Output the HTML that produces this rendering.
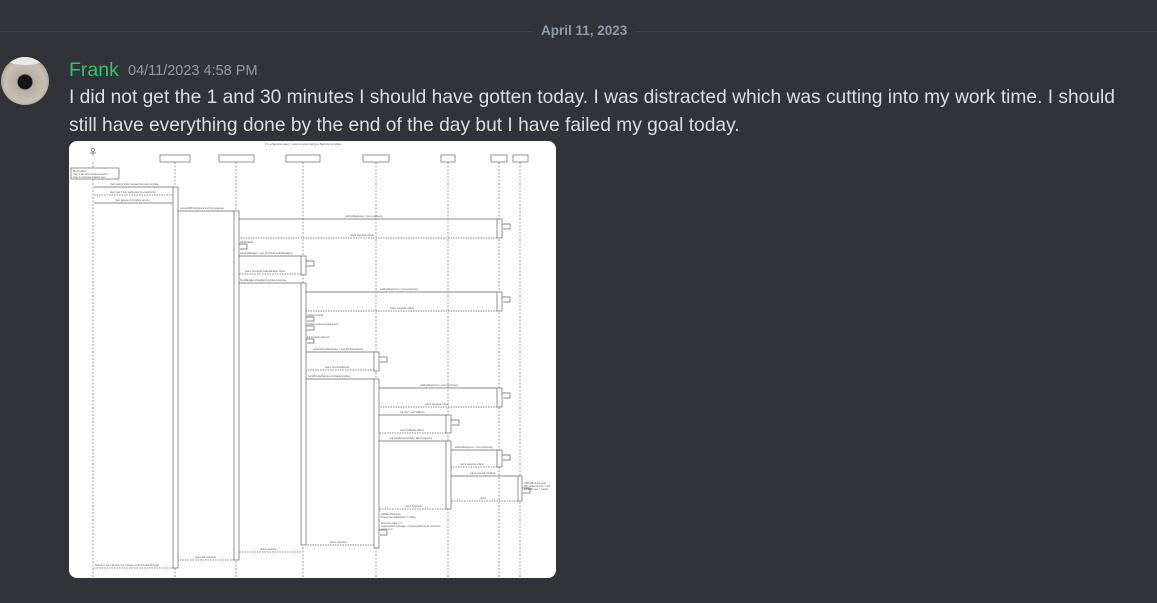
<!DOCTYPE html>
<html><head><meta charset="utf-8"><style>
body{margin:0;width:1157px;height:603px;background:#313338;overflow:hidden;font-family:"Liberation Sans",sans-serif;position:relative}
.div{position:absolute;top:31px;left:0;right:0;height:1px;background:#3f4147}
.date{position:absolute;top:22px;left:533px;padding:0 8px;background:#313338;color:#949ba4;font-size:13.5px;font-weight:bold;line-height:18px}
.av{position:absolute;left:1px;top:57px;width:48px;height:48px;border-radius:50%;background:radial-gradient(circle at 50% 52%,#141414 0 7px,#b8aca2 8px,#c9bfb5 20px,#a39d96 26px);overflow:hidden}
.av:before{content:"";position:absolute;left:4px;top:-6px;width:40px;height:14px;border-radius:50%;background:#e8e8e8}
.name{position:absolute;left:69px;top:58px;color:#2dc770;font-size:19.5px;line-height:24px}
.ts{position:absolute;left:128px;top:62px;color:#949ba4;font-size:14.5px;line-height:18px}
.msg{position:absolute;left:69px;top:84px;width:1050px;color:#dbdee1;font-size:19.2px;line-height:27.5px}
.img{position:absolute;left:69px;top:141px;width:487px;height:437px;background:#fff;border-radius:8px;overflow:hidden}
</style></head><body>
<div class="div"></div><div class="date">April 11, 2023</div>
<div class="av"></div>
<div class="name">Frank</div><div class="ts">04/11/2023 4:58 PM</div>
<div class="msg">I did not get the 1 and 30 minutes I should have gotten today. I was distracted which was cutting into my work time. I should still have everything done by the end of the day but I have failed my goal today.</div>
<div class="img">
<svg width="487" height="437" viewBox="69 141 487 437" xmlns="http://www.w3.org/2000/svg" font-family="Liberation Sans" font-size="3" fill="#555">
<text x="265" y="145">I'm a Service user, I want to stop being a Service provider</text>
<g stroke="#777" stroke-width="0.7" stroke-dasharray="2,1.5">
<line x1="93" y1="162" x2="93" y2="578"/><line x1="175" y1="162" x2="175" y2="578"/><line x1="236" y1="162" x2="236" y2="578"/><line x1="303" y1="162" x2="303" y2="578"/><line x1="376" y1="162" x2="376" y2="578"/><line x1="448" y1="162" x2="448" y2="578"/><line x1="499" y1="162" x2="499" y2="578"/><line x1="520" y1="162" x2="520" y2="578"/>
</g>
<g fill="#fff" stroke="#666" stroke-width="0.7">
<circle cx="93" cy="150" r="1.6"/><line x1="93" y1="152" x2="93" y2="156"/><line x1="90" y1="153" x2="96" y2="153"/>
<rect x="160" y="155" width="30" height="7"/><rect x="219" y="155" width="35" height="7"/><rect x="286" y="155" width="34" height="7"/><rect x="363" y="155" width="26" height="7"/><rect x="441" y="155" width="14" height="7"/><rect x="491" y="155" width="16" height="7"/><rect x="513" y="155" width="15" height="7"/>
<rect x="71" y="168" width="48" height="11"/>
<rect x="173" y="187" width="5" height="381"/><rect x="234" y="211" width="5" height="349"/>
<rect x="301" y="256" width="5" height="19"/><rect x="301" y="283" width="5" height="262"/>
<rect x="374" y="352" width="5" height="19"/><rect x="374" y="379" width="5" height="169"/>
<rect x="446" y="415" width="5" height="18"/><rect x="446" y="441" width="5" height="68"/>
<rect x="497" y="219" width="5" height="19"/><rect x="497" y="292" width="5" height="19"/><rect x="497" y="388" width="5" height="19"/><rect x="497" y="450" width="5" height="17"/>
<rect x="518" y="476" width="4" height="25"/>
</g>
<g stroke="#666" stroke-width="0.7" fill="none">
<path d="M94 187H173M94 203H173M178 211H234M239 219H497M239 256H301M239 283H301M306 292H497M306 352H374M306 379H374M379 388H497M379 415H446M379 441H446M451 450H497M451 476H518"/>
<path d="M502 224h8v5h-7M239 244h8v5h-7M306 261h8v5h-7M502 297h8v5h-7M306 317h8v4h-7M306 326h8v4h-7M306 339h8v4h-7M379 357h8v5h-7M502 393h8v5h-7M451 420h8v5h-7M502 455h8v5h-7M522 488h8v5h-7M379 530h8v5h-7"/>
<path stroke-dasharray="1.5,1" d="M173 195H94M497 238H239M301 274H239M497 311H306M374 370H306M497 407H379M446 433H379M497 467H451M518 501H451M446 509H379M374 545H306M301 552H239M234 560H178M173 568H94"/>
</g>
<g font-size="2.4">
<text x="73" y="172">Precondition</text><text x="73" y="175">User is an authenticated session</text><text x="73" y="178">User is a Service creation user</text>
<text x="110" y="185">User selects button answer that was complete</text><text x="110" y="193">Alert user if they really want to unsubscribe</text><text x="115" y="201">User agrees to complete service</text>
<text x="180" y="209">removeSPFCompleted and this response</text><text x="345" y="217">setFirstResponse = new response()</text><text x="350" y="236">return response object</text>
<text x="240" y="243">ISPasdfasdf</text><text x="240" y="254">serviceManager = new ServiceProviderManager()</text><text x="245" y="272">return ServiceProviderManager object</text><text x="240" y="281">ServManager.unregisterComplete response</text>
<text x="380" y="290">setFirstResponse = new response()</text><text x="390" y="309">return response object</text>
<text x="307" y="316">Update records</text><text x="307" y="325">Update response parameters</text><text x="307" y="338">log complete attempt</text>
<text x="313" y="350">setServProviderService = new ServFirstService</text><text x="325" y="368">return ServFirstService</text><text x="308" y="377">ServProviderService.completeComplete</text>
<text x="420" y="386">setFirstResponse = new response()</text><text x="425" y="405">return response object</text><text x="400" y="413">sql_obj = new SqlEntity</text><text x="400" y="431">return SqlEntity object</text><text x="390" y="439">sql.complete(Complete, false) response</text>
<text x="455" y="448">setFirstResponse = new response()</text><text x="460" y="465">return response object</text><text x="470" y="474">sql.executesql complete</text>
<text x="524" y="484">UPDATE documents</text><text x="524" y="487">SET active=0 user = null</text><text x="524" y="490">WHERE user = userId</text><text x="480" y="499">return</text><text x="405" y="507">return response</text>
<text x="381" y="515">Validate Response</text><text x="381" y="518">if(response.SalesOrder == false)</text><text x="381" y="524">Response.data == 1</text><text x="381" y="527">responseText.message = "Service failed to be removed"</text><text x="381" y="530">return error</text>
<text x="330" y="543">return response</text><text x="260" y="550">return response</text><text x="195" y="558">return this response</text><text x="95" y="566">Display to user 'Account is no longer a ServProviderProvider'</text>
</g>
</svg>
</div>
</body></html>
